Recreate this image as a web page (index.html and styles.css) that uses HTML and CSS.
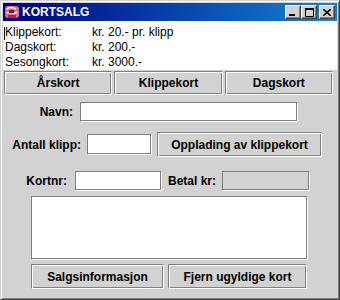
FILE: index.html
```html
<!DOCTYPE html>
<html lang="no">
<head>
    <meta charset="UTF-8">
    <title>KORTSALG</title>
    <link rel="stylesheet" href="styles.css">
</head>
<body>

<div class="window">
    <div class="titlebar">
        <svg class="app-icon" width="16" height="16" viewBox="0 0 16 16">
            <rect x="1" y="2" width="14" height="12" rx="3" fill="#e86a8a"/>
            <path d="M3 5 C5 3, 9 3, 12 5" stroke="#fff" stroke-width="1.5" fill="none"/>
            <path d="M3 9 C6 7, 10 11, 13 8" stroke="#fff" stroke-width="1.5" fill="none"/>
            <rect x="4" y="11" width="8" height="3" fill="#c02040"/>
            <rect x="5" y="6" width="5" height="3" fill="#7a1030"/>
        </svg>
        <span class="title">KORTSALG</span>
        <div class="caption-buttons">
            <button class="cap-btn">
                <svg width="8" height="7" viewBox="0 0 8 7"><rect x="0" y="5" width="6" height="2" fill="#000"/></svg>
            </button>
            <button class="cap-btn">
                <svg width="9" height="9" viewBox="0 0 9 9"><path d="M0.5 0.5h8v8h-8z" stroke="#000" fill="none"/><rect x="0" y="0" width="9" height="2" fill="#000"/></svg>
            </button>
            <button class="cap-btn close">
                <svg width="8" height="7" viewBox="0 0 8 7"><path d="M0 0l8 7M8 0L0 7" stroke="#000" stroke-width="1.6"/></svg>
            </button>
        </div>
    </div>

    <div class="content">
        <div class="info">
            <span class="caret"></span>
            <span>Klippekort:</span><span>kr. 20.- pr. klipp</span>
            <span>Dagskort:</span><span>kr. 200.-</span>
            <span>Sesongkort:</span><span>kr. 3000.-</span>
        </div>

        <div class="tabs">
            <button class="btn">Årskort</button>
            <button class="btn">Klippekort</button>
            <button class="btn">Dagskort</button>
        </div>

        <div class="row row-navn">
            <label class="lbl lbl-navn">Navn:</label>
            <input type="text" class="field field-navn">
        </div>

        <div class="row row-klipp">
            <label class="lbl lbl-klipp">Antall klipp:</label>
            <input type="text" class="field field-klipp">
            <button class="btn btn-opplading">Opplading av klippekort</button>
        </div>

        <div class="row row-kort">
            <label class="lbl lbl-kort">Kortnr:</label>
            <input type="text" class="field field-kort">
            <label class="lbl lbl-betal">Betal kr:</label>
            <input type="text" class="field field-betal" disabled>
        </div>

        <textarea class="output"></textarea>

        <div class="bottom">
            <button class="btn btn-salg">Salgsinformasjon</button>
            <button class="btn btn-fjern">Fjern ugyldige kort</button>
        </div>
    </div>
</div>

</body>
</html>
```

FILE: styles.css
```css
* {
    box-sizing: border-box;
    margin: 0;
    padding: 0;
    font-family: "Liberation Sans", Arial, sans-serif;
}

body {
    background: #d2d2d2;
}

.window {
    width: 340px;
    height: 300px;
    background: #d2d2d2;
    border: 1px solid;
    border-color: #d2d2d2 #404040 #404040 #d2d2d2;
    box-shadow: inset 1px 1px 0 #fff, inset -1px -1px 0 #808080;
    padding: 2px;
}

.titlebar {
    height: 18px;
    display: flex;
    align-items: center;
    padding: 0 2px 0 1px;
    background: linear-gradient(to right, #000080, #1084d0);
}

.app-icon {
    margin-right: 2px;
}

.title {
    color: #fff;
    font-weight: bold;
    font-size: 12px;
}

.caption-buttons {
    margin-left: auto;
    display: flex;
}

.cap-btn {
    width: 16px;
    height: 14px;
    background: #d2d2d2;
    border: 1px solid;
    border-color: #fff #404040 #404040 #fff;
    box-shadow: inset -1px -1px 0 #808080;
    display: flex;
    align-items: center;
    justify-content: center;
}

.cap-btn.close {
    margin-left: 2px;
}

.info {
    position: relative;
    height: 49px;
    background: #fff;
    padding: 4px 0 0 2px;
    display: grid;
    grid-template-columns: 87px auto;
    grid-auto-rows: 15px;
    font-size: 12px;
    line-height: 15px;
    color: #000;
}

.caret {
    position: absolute;
    left: 1px;
    top: 6px;
    width: 1px;
    height: 13px;
    background: #000;
}

.btn {
    background: #d2d2d2;
    border: 1px solid;
    border-color: #808080 #fff #fff #808080;
    box-shadow: inset 1px 1px 0 #fff, inset -1px -1px 0 #808080;
    font-size: 12px;
    font-weight: bold;
    color: #000;
}

.tabs {
    display: grid;
    grid-template-columns: 1fr 1fr 1fr;
    gap: 2px;
    height: 24px;
    margin-top: 1px;
    padding: 0 4px 0 1px;
}

.row {
    display: flex;
    align-items: center;
}

.lbl {
    font-size: 12px;
    font-weight: bold;
    color: #000;
    text-align: right;
}

.field {
    height: 20px;
    background: #fff;
    border: 1px solid;
    border-color: #808080 #fff #fff #808080;
    box-shadow: inset -1px -1px 0 #808080;
    font-size: 12px;
}

.field:disabled {
    background: #d2d2d2;
}

.row-navn {
    margin-top: 7px;
    gap: 7px;
}

.lbl-navn {
    width: 70px;
}

.field-navn {
    width: 218px;
}

.row-klipp {
    margin-top: 10px;
    height: 25px;
}

.lbl-klipp {
    width: 78px;
    margin-right: 6px;
}

.field-klipp {
    width: 65px;
    height: 21px;
    margin-right: 5px;
}

.btn-opplading {
    width: 165px;
    height: 25px;
}

.row-kort {
    margin-top: 14px;
}

.lbl-kort {
    width: 64px;
    margin-right: 8px;
}

.field-kort {
    width: 87px;
    margin-right: 6px;
}

.lbl-betal {
    margin-right: 6px;
}

.field-betal {
    width: 88px;
}

.output {
    display: block;
    width: 277px;
    height: 64px;
    margin: 5px 0 0 28px;
    resize: none;
    background: #fff;
    border: 1px solid;
    border-color: #808080 #fff #fff #808080;
    box-shadow: inset -1px -1px 0 #808080;
}

.bottom {
    display: flex;
    gap: 4px;
    margin: 4px 0 0 28px;
    height: 25px;
}

.btn-salg {
    width: 133px;
}

.btn-fjern {
    width: 139px;
}
```
